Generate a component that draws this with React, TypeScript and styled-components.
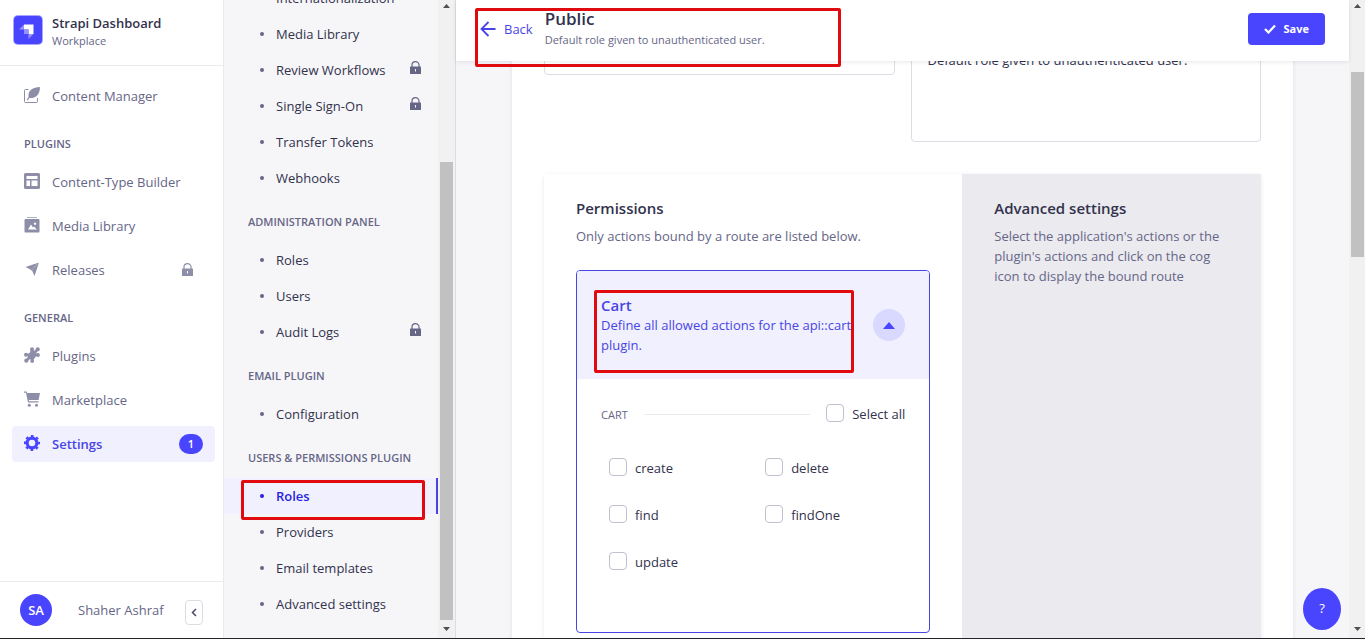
import React from 'react';
import styled, { createGlobalStyle, css } from 'styled-components';

const color = {
  primary: '#4945ff',
  primaryText: '#4945e5',
  primaryDark: '#271fe0',
  primarySoft: '#f0f0ff',
  primaryTint: '#d9d8ff',
  ink: '#32324d',
  muted: '#666687',
  icon: '#8e8ea9',
  line: '#eaeaef',
  field: '#dcdce4',
  page: '#f6f6f9',
  mark: '#e00b0f',
};

const GlobalStyle = createGlobalStyle`
  *, *::before, *::after { box-sizing: border-box; }
  body {
    margin: 0;
    font-family: 'Segoe UI', 'Open Sans', 'Noto Sans', sans-serif;
    font-size: 13px;
    line-height: 20px;
    color: ${color.ink};
    background: ${color.page};
  }
  h1, h2, h3, p, ul { margin: 0; padding: 0; }
  ul { list-style: none; }
  a { color: inherit; text-decoration: none; }
  button, input, textarea { font: inherit; color: inherit; }
  svg { display: block; flex: none; }
`;

const Shell = styled.div`
  display: grid;
  grid-template-columns: 224px 232px minmax(0, 1fr) 16px;
  height: 100vh;
  overflow: hidden;
  border-bottom: 1px solid #262229;
`;

/* Main navigation */

const MainNav = styled.nav`
  display: flex;
  flex-direction: column;
  min-height: 0;
  background: #fff;
  border-right: 1px solid ${color.line};
`;

const Brand = styled.div`
  display: flex;
  align-items: center;
  gap: 9px;
  height: 66px;
  padding: 0 13px 6px;
  border-bottom: 1px solid ${color.line};
`;

const BrandText = styled.div`
  padding-top: 4px;
`;

const BrandName = styled.p`
  font-weight: 600;
  line-height: 18px;
`;

const BrandPlace = styled.p`
  font-size: 11px;
  line-height: 18px;
  color: ${color.muted};
`;

const NavBody = styled.div`
  flex: 1;
  min-height: 0;
  padding: 12px 8px 0 12px;
  overflow: hidden;
`;

const NavList = styled.ul`
  display: flex;
  flex-direction: column;
  gap: 8px;
`;

const SectionLabel = styled.h2<{ $inset: number; $top: number }>`
  margin: ${(p) => p.$top}px 0 10px;
  padding-left: ${(p) => p.$inset}px;
  font-size: 11px;
  font-weight: 600;
  line-height: 20px;
  text-transform: uppercase;
  color: ${color.muted};
`;

const NavLink = styled.a<{ $active?: boolean }>`
  display: flex;
  align-items: center;
  gap: 12px;
  height: 36px;
  padding: 0 12px;
  border-radius: 4px;
  color: ${color.muted};
  svg { color: ${color.icon}; }
  svg:first-child { margin-bottom: 2px; }
  ${(p) => p.$active && css`
    background: ${color.primarySoft};
    color: ${color.primaryText};
    font-weight: 600;
    svg { color: ${color.primary}; }
  `}
`;

const NavText = styled.span`
  flex: 1;
`;

const LockSlot = styled.span`
  padding-right: 10px;
`;

const Count = styled.span`
  width: 24px;
  border-radius: 10px;
  background: ${color.primary};
  color: #fff;
  font-size: 11px;
  text-align: center;
`;

const Account = styled.div`
  display: flex;
  align-items: center;
  height: 57px;
  padding: 0 20px;
  border-top: 1px solid ${color.line};
`;

const Avatar = styled.span`
  width: 32px;
  margin-right: 26px;
  border-radius: 50%;
  background: ${color.primary};
  color: #fff;
  font-size: 13px;
  font-weight: 600;
  line-height: 32px;
  text-align: center;
`;

const AccountName = styled.span`
  flex: 1;
  white-space: nowrap;
  color: ${color.muted};
`;

const CollapseButton = styled.button`
  display: grid;
  place-items: center;
  width: 18px;
  height: 25px;
  margin-top: 5px;
  padding: 0;
  border: 1px solid ${color.field};
  border-radius: 4px;
  background: #fff;
`;

/* Settings navigation */

const SubNav = styled.nav`
  display: flex;
  min-height: 0;
  overflow: hidden;
  border-right: 1px solid ${color.field};
`;

const SubNavBody = styled.div`
  flex: 1;
  min-width: 0;
  margin-top: -20px;
`;

const SubLink = styled.a<{ $active?: boolean }>`
  position: relative;
  display: flex;
  align-items: center;
  height: 36px;
  padding: 0 15px 0 36px;
  border-right: 2px solid transparent;
  &::before {
    content: '';
    width: 4px;
    height: 4px;
    margin-right: 12px;
    border-radius: 50%;
    background: ${color.muted};
  }
  svg { margin-bottom: 5px; color: ${color.muted}; }
  ${(p) => p.$active && css`
    background: ${color.primarySoft};
    border-right-color: ${color.primaryText};
    color: ${color.primaryDark};
    font-weight: 600;
    &::before { background: ${color.primaryDark}; }
  `}
`;

/* Scroll bars */

const Track = styled.div`
  display: flex;
  flex-direction: column;
  align-items: center;
  flex: none;
  min-width: 17px;
  padding: 4px 0 7px;
  background: #f1f1f1;
  color: #505050;
  svg:last-child { margin-top: auto; }
`;

const Thumb = styled.div<{ $top: number; $size: number }>`
  width: 13px;
  height: ${(p) => p.$size}%;
  margin-top: ${(p) => p.$top}px;
  background: #c1c1c1;
`;

/* Content */

const Main = styled.main`
  position: relative;
  display: flex;
  flex-direction: column;
  min-width: 0;
  min-height: 0;
`;

const Header = styled.header`
  position: relative;
  z-index: 1;
  display: flex;
  align-items: center;
  height: 61px;
  flex: none;
  padding: 0 24px 4px;
  background: #fff;
  box-shadow: 0 1px 4px rgba(33, 33, 52, 0.1);
`;

const BackLink = styled.a`
  display: flex;
  align-items: center;
  gap: 8px;
  margin-right: 12px;
  color: ${color.primaryText};
`;

const HeaderText = styled.div`
  flex: 1;
  padding-top: 3px;
`;

const Title = styled.h1`
  font-size: 17px;
  font-weight: 600;
  line-height: 20px;
`;

const Subtitle = styled.p`
  font-size: 11px;
  line-height: 22px;
  color: ${color.muted};
`;

const SaveButton = styled.button`
  display: flex;
  align-items: center;
  gap: 8px;
  height: 32px;
  padding: 0 16px;
  border: 0;
  border-radius: 4px;
  background: ${color.primary};
  color: #fff;
  font-size: 11px;
  font-weight: 700;
`;

const Scroller = styled.div`
  flex: 1;
  min-height: 0;
  padding: 0 56px;
  overflow: hidden;
`;

const Card = styled.form`
  margin-top: -26px;
  padding: 0 32px 32px;
  background: #fff;
  box-shadow: 0 1px 4px rgba(33, 33, 52, 0.1);
`;

const Fields = styled.div`
  display: grid;
  grid-template-columns: 1fr 1fr;
  align-items: start;
  gap: 16px;
  margin-bottom: 32px;
`;

const fieldBox = css`
  display: block;
  width: 100%;
  border: 1px solid ${color.field};
  border-radius: 4px;
  background: #fff;
  outline: 0;
`;

const TextInput = styled.input`
  ${fieldBox}
  height: 40px;
  padding: 0 16px;
`;

const TextArea = styled.textarea`
  ${fieldBox}
  height: 107px;
  padding: 14px 16px;
  resize: none;
`;

const Panel = styled.section`
  display: grid;
  grid-template-columns: 7fr 5fr;
  min-height: 520px;
  border-radius: 4px;
  box-shadow: 0 1px 4px rgba(33, 33, 52, 0.1);
`;

const PanelColumn = styled.div<{ $shaded?: boolean }>`
  padding: 24px 32px;
  background: ${(p) => (p.$shaded ? color.line : '#fff')};
`;

const PanelTitle = styled.h2`
  margin-bottom: 8px;
  font-size: 15px;
  font-weight: 600;
  line-height: 20px;
`;

const PanelText = styled.p`
  color: ${color.muted};
`;

const Accordion = styled.section`
  margin-top: 24px;
  border: 1px solid ${color.primaryText};
  border-radius: 4px;
  overflow: hidden;
`;

const AccordionHead = styled.div`
  position: relative;
  display: flex;
  align-items: center;
  gap: 16px;
  padding: 24px;
  background: ${color.primarySoft};
  color: ${color.primaryText};
`;

const AccordionText = styled.div`
  flex: 1;
`;

const AccordionTitle = styled.h3`
  font-size: 15px;
  font-weight: 600;
  line-height: 20px;
`;

const ToggleButton = styled.button`
  display: grid;
  place-items: center;
  flex: none;
  width: 32px;
  height: 32px;
  padding: 0;
  border: 0;
  border-radius: 50%;
  background: ${color.primaryTint};
  color: ${color.primary};
`;

const AccordionBody = styled.div`
  padding: 24px 24px 60px;
`;

const GroupHead = styled.div`
  display: flex;
  align-items: center;
  gap: 16px;
  margin-bottom: 33px;
`;

const GroupName = styled.h4`
  margin: 0;
  padding-top: 2px;
  font-size: 11px;
  font-weight: 400;
  line-height: 20px;
  text-transform: uppercase;
  color: ${color.muted};
`;

const Rule = styled.span`
  flex: 1;
  height: 1px;
  background: ${color.line};
`;

const Check = styled.label`
  display: flex;
  gap: 8px;
`;

const CheckBox = styled.input.attrs({ type: 'checkbox' })`
  appearance: none;
  width: 18px;
  height: 18px;
  margin: 0;
  border: 1px solid #c0c0cf;
  border-radius: 4px;
  background: #fff;
`;

const Actions = styled.div`
  display: grid;
  grid-template-columns: 1fr 1fr;
  gap: 27px 16px;
  padding-left: 8px;
`;

const HelpButton = styled.button`
  position: absolute;
  right: 8px;
  bottom: 8px;
  width: 38px;
  height: 42px;
  padding: 0 0 2px;
  border: 0;
  border-radius: 50%;
  background: ${color.primary};
  color: #fff;
`;

/* Red frame that lies over a highlighted area */
const Highlight = styled.span<{ $x: number; $y: number; $w: number; $h: number }>`
  position: absolute;
  left: ${(p) => p.$x}px;
  top: ${(p) => p.$y}px;
  width: ${(p) => p.$w}px;
  height: ${(p) => p.$h}px;
  border: 3px solid ${color.mark};
  border-radius: 2px;
  pointer-events: none;
`;

/* Icons */

const Logo = () => (
  <svg width="30" height="30" viewBox="0 0 30 30" aria-hidden="true">
    <rect width="30" height="30" rx="5" fill="#a9a7ff" />
    <rect x="1" y="1" width="28" height="28" rx="4" fill="#4945ff" />
    <path d="M11 9.500h9.500v9.500h-5v-4.500H11z" fill="#fff" />
    <path d="M11 9.500v5H6z" fill="#9593ff" />
    <path d="M11 14.500h4.500V19H11z" fill="#9593ff" />
    <path d="M15.500 19h5l-5 5z" fill="#9593ff" />
  </svg>
);

const FeatherIcon = () => (
  <svg width="16" height="16" viewBox="0 0 16 16" fill="currentColor" aria-hidden="true">
    <path d="M4.500 2.500H1.500a1 1 0 0 0-1 1v11a1 1 0 0 0 1 1h11a1 1 0 0 0 1-1V11" fill="none" stroke="currentColor" />
    <path d="M16 0C9 0 3.600 3.500 4.600 9.800L2.800 13l1 .6 1.600-2.600C11.500 11.800 16 7.500 16 0z" />
  </svg>
);

const LayoutIcon = () => (
  <svg width="16" height="16" viewBox="0 0 16 16" fill="currentColor" aria-hidden="true">
    <path fillRule="evenodd" d="M1.500 0h13A1.500 1.500 0 0 1 16 1.500v13a1.500 1.500 0 0 1-1.500 1.500h-13A1.500 1.500 0 0 1 0 14.500v-13A1.500 1.500 0 0 1 1.500 0zM2.500 3v3h11V3zM2.500 7.500v5.500H6V7.500zM7.500 7.500v5.500h6V7.500z" />
  </svg>
);

const PicturesIcon = () => (
  <svg width="16" height="16" viewBox="0 0 16 16" fill="currentColor" aria-hidden="true">
    <path d="M3 0h10v1H3z" opacity=".7" />
    <path fillRule="evenodd" d="M1.500 2h13a1 1 0 0 1 1 1v11.500a1 1 0 0 1-1 1h-13a1 1 0 0 1-1-1V3a1 1 0 0 1 1-1zM4 12.500h9L10 9.500l-1 1-2-3zM11 5.500a1.200 1.200 0 1 0 .1 0z" />
  </svg>
);

const PlaneIcon = () => (
  <svg width="16" height="16" viewBox="0 0 16 16" fill="currentColor" aria-hidden="true">
    <path d="M15 1.500 1.500 6l5 2.500zM15 1.500 10.500 15 8 9.500z" />
    <path d="M14.500 2 6.200 8.200l1.600 1.600z" />
  </svg>
);

const PuzzleIcon = () => (
  <svg width="16" height="16" viewBox="0 0 16 16" fill="currentColor" aria-hidden="true">
    <path d="M7 3 10.800 3.600 13 2l1 1.500-1.600 2.300L13.500 9 11.500 9.800 9 13.500 5.800 12.200 3 14.500 1.500 13 3.800 10 3 7 5.600 6z" />
    <circle cx="8" cy="2.300" r="2" />
    <circle cx="13.700" cy="2.300" r="2.100" />
    <circle cx="14" cy="8" r="1.900" />
    <circle cx="2" cy="7.800" r="2" />
    <circle cx="2.300" cy="13.700" r="2.100" />
    <circle cx="8.200" cy="14" r="1.900" />
  </svg>
);

const CartIcon = () => (
  <svg width="16" height="16" viewBox="0 0 16 16" fill="currentColor" aria-hidden="true">
    <path d="M0 .5h2.600l.6 1.500H16l-1.400 7H4.800l.2 1.200h9.500v1.300H4L2 1.800H0z" />
    <circle cx="5.300" cy="14.200" r="1.500" />
    <circle cx="12.500" cy="14.200" r="1.500" />
  </svg>
);

const CogIcon = () => (
  <svg width="16" height="16" viewBox="0 0 16 16" aria-hidden="true">
    <circle cx="8" cy="8" r="4.900" fill="none" stroke="currentColor" strokeWidth="3.200" />
    <circle cx="8" cy="8" r="6.900" fill="none" stroke="currentColor" strokeWidth="2.200" strokeDasharray="2.710 2.710" strokeDashoffset="1.350" />
  </svg>
);

const LockIcon = () => (
  <svg width="11" height="13" viewBox="0 0 11 13" aria-hidden="true">
    <path d="M2 6V4a3.500 3.300 0 0 1 7 0v2" fill="none" stroke="currentColor" strokeWidth="1.200" />
    <path fillRule="evenodd" d="M.5 5.500h10a.5.5 0 0 1 .5.5v6.500a.5.5 0 0 1-.5.500H.5a.5.500 0 0 1-.5-.5V6a.5.500 0 0 1 .5-.5zM5 8v2.500h1V8z" fill="currentColor" />
  </svg>
);

const ArrowLeftIcon = () => (
  <svg width="16" height="16" viewBox="0 0 16 16" fill="none" stroke="currentColor" strokeWidth="1.800" aria-hidden="true">
    <path d="M15.500 8H1.500M8.500 1 1.500 8l7 7" />
  </svg>
);

const CheckIcon = () => (
  <svg width="12" height="10" viewBox="0 0 12 10" fill="none" stroke="currentColor" strokeWidth="2.200" aria-hidden="true">
    <path d="m1 5 3.500 3.500L11 1.500" />
  </svg>
);

const ChevronLeftIcon = () => (
  <svg width="6" height="9" viewBox="0 0 6 9" fill="none" stroke="#4a4a6a" strokeWidth="1.500" aria-hidden="true">
    <path d="M5 1 1.500 4.500 5 8" />
  </svg>
);

const CaretUpIcon = () => (
  <svg width="12" height="7" viewBox="0 0 12 7" fill="currentColor" aria-hidden="true">
    <path d="M6 0 12 7H0z" />
  </svg>
);

const ScrollArrow = ({ down }: { down?: boolean }) => (
  <svg width="7" height="4" viewBox="0 0 7 4" fill="currentColor" aria-hidden="true">
    <path d={down ? 'M0 0h7L3.500 4z' : 'M3.500 0 7 4H0z'} />
  </svg>
);

const ScrollBar = ({ top, size }: { top: number; size: number }) => (
  <Track aria-hidden="true">
    <ScrollArrow />
    <Thumb $top={top} $size={size} />
    <ScrollArrow down />
  </Track>
);

type NavEntry = { label: string; icon: React.ReactNode; locked?: boolean; active?: boolean; count?: number };

const navGroups: { title?: string; items: NavEntry[] }[] = [
  { items: [{ label: 'Content Manager', icon: <FeatherIcon /> }] },
  {
    title: 'Plugins',
    items: [
      { label: 'Content-Type Builder', icon: <LayoutIcon /> },
      { label: 'Media Library', icon: <PicturesIcon /> },
      { label: 'Releases', icon: <PlaneIcon />, locked: true },
    ],
  },
  {
    title: 'General',
    items: [
      { label: 'Plugins', icon: <PuzzleIcon /> },
      { label: 'Marketplace', icon: <CartIcon /> },
      { label: 'Settings', icon: <CogIcon />, active: true, count: 1 },
    ],
  },
];

type SubEntry = { label: string; locked?: boolean; active?: boolean };

const settingsGroups: { title?: string; items: SubEntry[] }[] = [
  {
    items: [
      { label: 'Internationalization' },
      { label: 'Media Library' },
      { label: 'Review Workflows', locked: true },
      { label: 'Single Sign-On', locked: true },
      { label: 'Transfer Tokens' },
      { label: 'Webhooks' },
    ],
  },
  { title: 'Administration Panel', items: [{ label: 'Roles' }, { label: 'Users' }, { label: 'Audit Logs', locked: true }] },
  { title: 'Email Plugin', items: [{ label: 'Configuration' }] },
  {
    title: 'Users & Permissions Plugin',
    items: [{ label: 'Roles', active: true }, { label: 'Providers' }, { label: 'Email templates' }, { label: 'Advanced settings' }],
  },
];

const actions = ['create', 'delete', 'find', 'findOne', 'update'];

export default function App() {
  return (
    <>
      <GlobalStyle />
      <Shell>
        <MainNav aria-label="Main">
          <Brand>
            <Logo />
            <BrandText>
              <BrandName>Strapi Dashboard</BrandName>
              <BrandPlace>Workplace</BrandPlace>
            </BrandText>
          </Brand>
          <NavBody>
            {navGroups.map((group, i) => (
              <React.Fragment key={i}>
                {group.title && <SectionLabel $inset={12} $top={20}>{group.title}</SectionLabel>}
                <NavList>
                  {group.items.map((item) => (
                    <li key={item.label}>
                      <NavLink href="#" $active={item.active}>
                        {item.icon}
                        <NavText>{item.label}</NavText>
                        {item.locked && <LockSlot><LockIcon /></LockSlot>}
                        {item.count && <Count>{item.count}</Count>}
                      </NavLink>
                    </li>
                  ))}
                </NavList>
              </React.Fragment>
            ))}
          </NavBody>
          <Account>
            <Avatar>SA</Avatar>
            <AccountName>Shaher Ashraf</AccountName>
            <CollapseButton aria-label="Collapse navigation"><ChevronLeftIcon /></CollapseButton>
          </Account>
        </MainNav>

        <SubNav aria-label="Settings">
          <SubNavBody>
            {settingsGroups.map((group, i) => (
              <React.Fragment key={i}>
                {group.title && <SectionLabel $inset={24} $top={16}>{group.title}</SectionLabel>}
                <ul>
                  {group.items.map((item) => (
                    <li key={item.label}>
                      <SubLink href="#" $active={item.active}>
                        <NavText>{item.label}</NavText>
                        {item.locked && <LockIcon />}
                        {item.active && <Highlight $x={17} $y={2} $w={184} $h={40} />}
                      </SubLink>
                    </li>
                  ))}
                </ul>
              </React.Fragment>
            ))}
          </SubNavBody>
          <ScrollBar top={154} size={73} />
        </SubNav>

        <Main>
          <Header>
            <BackLink href="#"><ArrowLeftIcon />Back</BackLink>
            <HeaderText>
              <Title>Public</Title>
              <Subtitle>Default role given to unauthenticated user.</Subtitle>
            </HeaderText>
            <SaveButton type="submit" form="role-form"><CheckIcon />Save</SaveButton>
            <Highlight $x={19} $y={8} $w={366} $h={59} />
          </Header>
          <Scroller>
            <Card id="role-form">
              <Fields>
                <TextInput aria-label="Name" defaultValue="" />
                <TextArea aria-label="Description" defaultValue="Default role given to unauthenticated user." />
              </Fields>
              <Panel>
                <PanelColumn>
                  <PanelTitle>Permissions</PanelTitle>
                  <PanelText>Only actions bound by a route are listed below.</PanelText>
                  <Accordion>
                    <AccordionHead>
                      <AccordionText>
                        <AccordionTitle>Cart</AccordionTitle>
                        <p>Define all allowed actions for the api::cart plugin.</p>
                      </AccordionText>
                      <ToggleButton type="button" aria-label="Collapse Cart" aria-expanded="true"><CaretUpIcon /></ToggleButton>
                      <Highlight $x={17} $y={19} $w={260} $h={83} />
                    </AccordionHead>
                    <AccordionBody>
                      <GroupHead>
                        <GroupName>Cart</GroupName>
                        <Rule />
                        <Check><CheckBox />Select all</Check>
                      </GroupHead>
                      <Actions>
                        {actions.map((name) => (
                          <Check key={name}><CheckBox />{name}</Check>
                        ))}
                      </Actions>
                    </AccordionBody>
                  </Accordion>
                </PanelColumn>
                <PanelColumn $shaded>
                  <PanelTitle>Advanced settings</PanelTitle>
                  <PanelText>Select the application's actions or the plugin's actions and click on the cog icon to display the bound route</PanelText>
                </PanelColumn>
              </Panel>
            </Card>
          </Scroller>
          <HelpButton aria-label="Help">?</HelpButton>
        </Main>
        <ScrollBar top={64} size={29.5} />
      </Shell>
    </>
  );
}
